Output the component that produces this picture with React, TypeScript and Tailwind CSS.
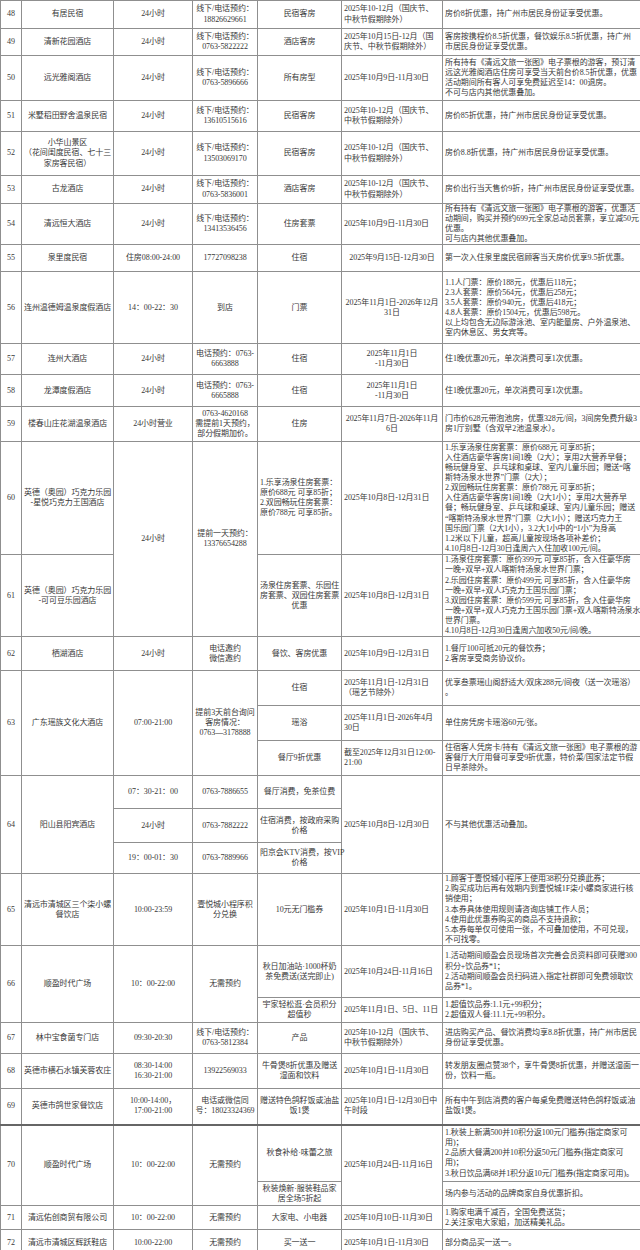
import type { ReactNode } from 'react';

// 多行文字：用 \n 手动断行，和原表保持一致
function Lines({ text }: { text: string }) {
  const parts = text.split('\n');
  return (
    <>
      {parts.map((p, i) => (
        <span key={i}>
          {p}
          {i < parts.length - 1 && <br />}
        </span>
      ))}
    </>
  );
}

function Td({
  children,
  left,
  rowSpan,
}: {
  children: string | ReactNode;
  left?: boolean;
  rowSpan?: number;
}) {
  return (
    <td
      rowSpan={rowSpan}
      className={`border border-[#8f8f8f] px-[2px] py-0 align-middle whitespace-nowrap ${left ? 'text-left' : 'text-center'}`}
    >
      {typeof children === 'string' ? <Lines text={children} /> : children}
    </td>
  );
}

const NOT_HOLIDAY = '2025年10-12月（国庆节、\n中秋节假期除外）';

export default function App() {
  return (
    <div className="w-[640px] h-[1250px] bg-white overflow-hidden">
      <table className="table-fixed border-collapse w-[640px] text-[8px] leading-[10.1px] tracking-[-0.08px] text-[#383838] font-['Liberation_Serif','Noto_Sans_CJK_SC',serif]">
        <colgroup>
          <col className="w-[21px]" />
          <col className="w-[92px]" />
          <col className="w-[79px]" />
          <col className="w-[65px]" />
          <col className="w-[84px]" />
          <col className="w-[101px]" />
          <col className="w-[198px]" />
        </colgroup>
        <tbody>
          <tr className="h-[28px]">
            <Td>48</Td>
            <Td>有居民宿</Td>
            <Td>24小时</Td>
            <Td>{'线下/电话预约：\n18826629661'}</Td>
            <Td>民宿客房</Td>
            <Td left>{NOT_HOLIDAY}</Td>
            <Td left>房价8折优惠，持广州市居民身份证享受优惠。</Td>
          </tr>
          <tr className="h-[27px]">
            <Td>49</Td>
            <Td>清新花园酒店</Td>
            <Td>24小时</Td>
            <Td>{'线下/电话预约：\n0763-5822222'}</Td>
            <Td>酒店客房</Td>
            <Td left>{'2025年10月15日-12月（国\n庆节、中秋节假期除外）'}</Td>
            <Td left>{'客房按携程价8.5折优惠，餐饮娱乐8.5折优惠，持广州\n市居民身份证享受优惠。'}</Td>
          </tr>
          <tr className="h-[45px]">
            <Td>50</Td>
            <Td>远光雅阁酒店</Td>
            <Td>24小时</Td>
            <Td>{'线下/电话预约：\n0763-5896666'}</Td>
            <Td>所有房型</Td>
            <Td left>2025年10月9日-11月30日</Td>
            <Td left>
              {'所有持有《清远文旅一张图》电子票根的游客，预订清\n远这光雅阁酒店住房可享受当天前台价8.5折优惠，优惠\n活动期间所有客人可享免费延迟至14：00退房。\n不可与店内其他优惠叠加。'}
            </Td>
          </tr>
          <tr className="h-[31px]">
            <Td>51</Td>
            <Td>米墅稻田野舍温泉民宿</Td>
            <Td>24小时</Td>
            <Td>{'线下/电话预约：\n13610515616'}</Td>
            <Td>民宿客房</Td>
            <Td left>{NOT_HOLIDAY}</Td>
            <Td left>房价85折优惠，持广州市居民身份证享受优惠。</Td>
          </tr>
          <tr className="h-[44px]">
            <Td>52</Td>
            <Td>{'小华山景区\n（花间闺度民宿、七十三\n家房客民宿）'}</Td>
            <Td>24小时</Td>
            <Td>{'线下/电话预约：\n13503069170'}</Td>
            <Td>民宿客房</Td>
            <Td left>{NOT_HOLIDAY}</Td>
            <Td left>房价8.8折优惠，持广州市居民身份证享受优惠。</Td>
          </tr>
          <tr className="h-[28px]">
            <Td>53</Td>
            <Td>古龙酒店</Td>
            <Td>24小时</Td>
            <Td>{'线下/电话预约：\n0763-5836001'}</Td>
            <Td>酒店客房</Td>
            <Td left>{NOT_HOLIDAY}</Td>
            <Td left>房价出行当天售价9折，持广州市居民身份证享受优惠。</Td>
          </tr>
          <tr className="h-[35px]">
            <Td>54</Td>
            <Td>清远恒大酒店</Td>
            <Td>24小时</Td>
            <Td>{'线下/电话预约：\n13413536456'}</Td>
            <Td>住房套票</Td>
            <Td left>2025年10月9日-11月30日</Td>
            <Td left>
              {'所有持有《清远文旅一张图》电子票根的游客，优惠活\n动期间，购买并预约699元全家总动员套票，享立减50元\n优惠。\n可与店内其他优惠叠加。'}
            </Td>
          </tr>
          <tr className="h-[27px]">
            <Td>55</Td>
            <Td>泉里度民宿</Td>
            <Td>住房08:00-24:00</Td>
            <Td>17727098238</Td>
            <Td>住宿</Td>
            <Td>2025年9月15日-12月30日</Td>
            <Td left>第一次入住泉里度民宿顾客当天房价优享9.5折优惠。</Td>
          </tr>
          <tr className="h-[72px]">
            <Td>56</Td>
            <Td>连州温德姆温泉度假酒店</Td>
            <Td>14：00-22：30</Td>
            <Td>到店</Td>
            <Td>门票</Td>
            <Td>{'2025年11月1日-2026年12月\n31日'}</Td>
            <Td left>
              {'1.1人门票：原价188元，优惠后118元；\n2.3人套票：原价564元，优惠后258元；\n3.5人套票：原价940元，优惠后418元；\n4.8人套票：原价1504元，优惠后598元。\n以上均包含无边际游泳池、室内能量房、户外温泉池、\n室内休息区、男女宾等。'}
            </Td>
          </tr>
          <tr className="h-[31px]">
            <Td>57</Td>
            <Td>连州大酒店</Td>
            <Td>24小时</Td>
            <Td>{'电话预约：0763-\n6663888'}</Td>
            <Td>住宿</Td>
            <Td>{'2025年11月1日\n-11月30日'}</Td>
            <Td left>住1晚优惠20元，单次消费可享1次优惠。</Td>
          </tr>
          <tr className="h-[32px]">
            <Td>58</Td>
            <Td>龙潭度假酒店</Td>
            <Td>24小时</Td>
            <Td>{'电话预约：0763-\n6665888'}</Td>
            <Td>住宿</Td>
            <Td>{'2025年11月1日\n-11月30日'}</Td>
            <Td left>住1晚优惠20元，单次消费可享1次优惠。</Td>
          </tr>
          <tr className="h-[35px]">
            <Td>59</Td>
            <Td>楼春山庄花湖温泉酒店</Td>
            <Td>24小时营业</Td>
            <Td>{'0763-4620168\n需提前1天预约，\n部分假期加价。'}</Td>
            <Td>住房</Td>
            <Td>{'2025年11月7日-2026年11月\n6日'}</Td>
            <Td left>{'门市价628元带泡池房，优惠328元/间，3间房免费升级3\n房1厅别墅（含双早2池温泉水）。'}</Td>
          </tr>
          <tr className="h-[113px]">
            <Td>60</Td>
            <Td>{'英德（奥园）巧克力乐园\n-星悦巧克力王国酒店'}</Td>
            <Td rowSpan={2}>24小时</Td>
            <Td rowSpan={2}>{'提前一天预约：\n13376654288'}</Td>
            <Td left>{'1.乐享汤泉住房套票：\n原价688元 可享85折；\n2.双园畅玩住房套票：\n原价788元 可享85折。'}</Td>
            <Td left>2025年10月8日-12月31日</Td>
            <Td left>
              {'1.乐享汤泉住房套票：原价688元 可享85折；\n入住酒店豪华客房1间1晚（2大）；享用2大营养早餐；\n畅玩健身室、乒乓球和桌球、室内儿童乐园；赠送“喀\n斯特汤泉水世界”门票（2大）；\n2.双园畅玩住房套票：原价788元 可享85折；\n入住酒店豪华客房1间1晚（2大1小）；享用2大营养早\n餐；畅玩健身室、乒乓球和桌球、室内儿童乐园；赠送\n“喀斯特汤泉水世界”门票（2大1小）；赠送巧克力王\n国乐园门票（2大1小），3.2大1小中的“1小”为身高\n1.2米以下儿童，超高儿童按现场各项补差价；\n4.10月8日-12月30日逢周六入住加收100元/间。'}
            </Td>
          </tr>
          <tr className="h-[81px]">
            <Td>61</Td>
            <Td>{'英德（奥园）巧克力乐园\n-可可豆乐园酒店'}</Td>
            <Td>{'汤泉住房套票、乐园住\n房套票、双园住房套票\n优惠'}</Td>
            <Td left>2025年10月8日-12月31日</Td>
            <Td left>
              {'1.汤泉住房套票：原价399元 可享85折，含入住豪华房\n一晚+双早+双人喀斯特汤泉水世界门票；\n2.乐园住房套票：原价499元 可享85折，含入住豪华房\n一晚+双早+双人巧克力王国乐园门票；\n3.双园住房套票：原价599元 可享85折，含入住豪华房\n一晚+双早+双人巧克力王国乐园门票+双人喀斯特汤泉水\n世界门票。\n4.10月8日-12月30日逢周六加收50元/间/晚。'}
            </Td>
          </tr>
          <tr className="h-[34px]">
            <Td>62</Td>
            <Td>栖湖酒店</Td>
            <Td>24小时</Td>
            <Td>{'电话邀约\n微信邀约'}</Td>
            <Td>餐饮、客房优惠</Td>
            <Td left>2025年10月9日-12月31日</Td>
            <Td left>{'1.餐厅100可抵20元的餐饮券；\n2.客房享受商务协议价。'}</Td>
          </tr>
          <tr className="h-[35px]">
            <Td rowSpan={3}>63</Td>
            <Td rowSpan={3}>广东瑶族文化大酒店</Td>
            <Td rowSpan={3}>07:00-21:00</Td>
            <Td rowSpan={3}>{'提前3天前台询问\n客房情况：\n0763—3178888'}</Td>
            <Td>住宿</Td>
            <Td left>{'2025年11月1日-12月31日\n（瑶艺节除外）'}</Td>
            <Td left>{'优享叁票瑶山阁舒适大/双床288元/间夜（送一次瑶浴）\n。'}</Td>
          </tr>
          <tr className="h-[35px]">
            <Td>瑶浴</Td>
            <Td left>{'2025年11月1日-2026年4月\n30日'}</Td>
            <Td left>单住房凭房卡瑶浴60元/张。</Td>
          </tr>
          <tr className="h-[35px]">
            <Td>餐厅9折优惠</Td>
            <Td left>{'截至2025年12月31日12:00-\n21:00'}</Td>
            <Td left>
              {'住宿客人凭房卡/持有《清远文旅一张图》电子票根的游\n客餐厅大厅用餐可享受9折优惠，特价菜/国家法定节假\n日早茶除外。'}
            </Td>
          </tr>
          <tr className="h-[33px]">
            <Td rowSpan={3}>64</Td>
            <Td rowSpan={3}>阳山县阳宾酒店</Td>
            <Td>07：30-21：00</Td>
            <Td>0763-7886655</Td>
            <Td>餐厅消费，免茶位费</Td>
            <Td rowSpan={3} left>2025年10月8日-12月30日</Td>
            <Td rowSpan={3} left>不与其他优惠活动叠加。</Td>
          </tr>
          <tr className="h-[34px]">
            <Td>24小时</Td>
            <Td>0763-7882222</Td>
            <Td>{'住宿消费，按政府采购\n价格'}</Td>
          </tr>
          <tr className="h-[31px]">
            <Td>19：00-01：30</Td>
            <Td>0763-7889966</Td>
            <Td>{'阳京会KTV消费，按VIP\n价格'}</Td>
          </tr>
          <tr className="h-[72px]">
            <Td>65</Td>
            <Td>{'清远市清城区三个柒小螺\n餐饮店'}</Td>
            <Td>10:00-23:59</Td>
            <Td>{'壹悦城小程序积\n分兑换'}</Td>
            <Td>10元无门槛券</Td>
            <Td left>2025年10月1日-11月30日</Td>
            <Td left>
              {'1.顾客于壹悦城小程序上使用38积分兑换此券；\n2.购买成功后再有效期内到壹悦城1F柒小螺商家进行核\n销使用；\n3.本券具体使用规则请咨询店铺工作人员；\n4.使用此优惠券购买的商品不支持退款；\n5.本券每单仅可使用一张，不可叠加使用，不可兑现，\n不可找零。'}
            </Td>
          </tr>
          <tr className="h-[52px]">
            <Td rowSpan={2}>66</Td>
            <Td rowSpan={2}>顺盈时代广场</Td>
            <Td rowSpan={2}>10：00-22:00</Td>
            <Td rowSpan={2}>无需预约</Td>
            <Td>{'秋日加油站·1000杯奶\n茶免费送(送完即止)'}</Td>
            <Td left>2025年10月24日-11月16日</Td>
            <Td left>
              {'1.活动期间顺盈会员现场首次完善会员资料即可获赠300\n积分+饮品券*1；\n2.活动期间顺盈会员扫码进入指定社群即可免费领取饮\n品券*1。'}
            </Td>
          </tr>
          <tr className="h-[25px]">
            <Td>{'宇家轻松逛·会员积分\n超值秒'}</Td>
            <Td left>2025年11月1日、5日、11日</Td>
            <Td left>{'1.超值饮品券:1.1元+99积分；\n2.超值双人餐:11.1元+99积分。'}</Td>
          </tr>
          <tr className="h-[31px]">
            <Td>67</Td>
            <Td>林中宝食菌专门店</Td>
            <Td>09:30-20:30</Td>
            <Td>{'线下/电话预约：\n0763-5812384'}</Td>
            <Td>产品</Td>
            <Td left>{NOT_HOLIDAY}</Td>
            <Td left>{'进店购买产品、餐饮消费均享8.8折优惠，持广州市居民\n身份证享受优惠。'}</Td>
          </tr>
          <tr className="h-[35px]">
            <Td>68</Td>
            <Td>英德市横石水镇芙蓉农庄</Td>
            <Td>{'08:30-14:00\n16:30-21:00'}</Td>
            <Td>13922569033</Td>
            <Td>{'牛骨煲8折优惠及赠送\n湿面和饮料'}</Td>
            <Td left>2025年10月1日-11月30日</Td>
            <Td left>{'转发朋友圈点赞38个，享牛骨煲8折优惠，并赠送湿面一\n份，饮料一瓶。'}</Td>
          </tr>
          <tr className="h-[36px]">
            <Td>69</Td>
            <Td>英德市鸽世家餐饮店</Td>
            <Td>{'10:00-14:00，\n17:00-21:00'}</Td>
            <Td>{'电话或微信同\n号：18023324369'}</Td>
            <Td>{'赠送特色鸽籽饭或油盐\n饭1煲'}</Td>
            <Td left>{'2025年10月1日-12月30日中\n午时段'}</Td>
            <Td left>{'所有中午到店消费的客户每桌免费赠送特色鸽籽饭或油\n盐饭1煲。'}</Td>
          </tr>
          <tr className="h-[57px] border-t-2 border-t-[#666]">
            <Td rowSpan={2}>70</Td>
            <Td rowSpan={2}>顺盈时代广场</Td>
            <Td rowSpan={2}>10：00-22:00</Td>
            <Td rowSpan={2}>无需预约</Td>
            <Td>秋食补给·味蕾之旅</Td>
            <Td rowSpan={2} left>2025年10月24日-11月16日</Td>
            <Td left>
              {'1.秋装上新满500并10积分返100元门槛券(指定商家可\n用)；\n2.品质大餐满200并10积分返50元门槛券(指定商家可\n用)；\n3.秋日饮品满68并1积分返10元门槛券(指定商家可用)。'}
            </Td>
          </tr>
          <tr className="h-[24px]">
            <Td>{'秋装焕新·服装鞋品家\n居全场5折起'}</Td>
            <Td left>场内参与活动的品牌商家自身优惠折扣。</Td>
          </tr>
          <tr className="h-[24px]">
            <Td>71</Td>
            <Td>清远佑创商贸有限公司</Td>
            <Td>10：00-22:00</Td>
            <Td>无需预约</Td>
            <Td>大家电、小电器</Td>
            <Td left>2025年10月10日-11月30日</Td>
            <Td left>{'1.购家电满千减百，全国免费送货；\n2.关注家电大家姐，加送精美礼品。'}</Td>
          </tr>
          <tr className="h-[27px] border-b-2 border-b-[#666]">
            <Td>72</Td>
            <Td>清远市清城区辉跃鞋店</Td>
            <Td>10:00-22:00</Td>
            <Td>无需预约</Td>
            <Td>买一送一</Td>
            <Td left>2025年10月1日-11月30日</Td>
            <Td left>部分商品买一送一。</Td>
          </tr>
        </tbody>
      </table>
    </div>
  );
}
